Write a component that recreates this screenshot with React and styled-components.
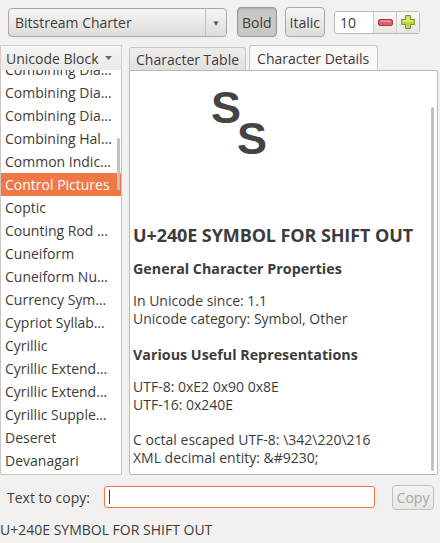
import React from 'react';
import styled, { createGlobalStyle, css } from 'styled-components';

const colors = {
  window: '#f2f1f0',
  text: '#3c3c3c',
  border: '#b6b4ae',
  orange: '#f07746',
  white: '#ffffff',
};

const GlobalStyle = createGlobalStyle`
  html, body {
    margin: 0;
    padding: 0;
    background: ${colors.window};
  }
  body {
    font-family: 'Open Sans', 'Noto Sans', sans-serif;
    font-size: 13px;
    color: ${colors.text};
  }
`;

const Window = styled.div`
  width: 440px;
  height: 543px;
  display: flex;
  flex-direction: column;
  background: ${colors.window};
  overflow: hidden;
`;

const Toolbar = styled.div`
  display: flex;
  align-items: center;
  height: 44px;
  padding: 0 8px;
`;

const buttonFace = css`
  border: 1px solid #a9a7a2;
  border-radius: 4px;
  background: linear-gradient(#f7f6f5, #dedcd8);
  box-sizing: border-box;
`;

const FontCombo = styled.div`
  ${buttonFace};
  width: 219px;
  height: 29px;
  display: flex;
  align-items: center;
  font-size: 14px;
`;

const ComboLabel = styled.span`
  flex: 1;
  padding-left: 6px;
`;

const ComboArrow = styled.span`
  width: 20px;
  height: 100%;
  border-left: 1px solid #c4c2bd;
  display: flex;
  align-items: center;
  justify-content: center;
  font-size: 8px;
  color: #555;
`;

const ToggleButton = styled.div`
  ${buttonFace};
  height: 30px;
  padding: 0 4px;
  margin-left: ${p => p.$gap}px;
  display: flex;
  align-items: center;
  font-size: 14px;
  ${p =>
    p.$active &&
    css`
      background: #cac8c4;
      border-color: #9c9a95;
      box-shadow: inset 0 1px 2px rgba(0, 0, 0, 0.15);
    `}
`;

const SpinBox = styled.div`
  display: flex;
  align-items: stretch;
  height: 23px;
  margin-left: 9px;
  border: 1px solid #bcbab5;
  border-radius: 3px;
  background: ${colors.white};
  box-sizing: border-box;
`;

const SpinEntry = styled.span`
  width: 38px;
  padding-left: 5px;
  box-sizing: border-box;
  display: flex;
  align-items: center;
  font-size: 14px;
`;

const SpinButton = styled.span`
  width: 22px;
  display: flex;
  align-items: center;
  justify-content: center;
  border-left: 1px solid #d2d0cc;
  background: linear-gradient(#f9f8f7, #e9e7e4);
`;

const Main = styled.div`
  flex: 1;
  display: flex;
  padding: 1px 2px 0 0;
  min-height: 0;
`;

const Sidebar = styled.div`
  width: 122px;
  display: flex;
  flex-direction: column;
`;

const SidebarHeader = styled.div`
  height: 25px;
  display: flex;
  align-items: center;
  gap: 6px;
  padding-left: 5px;
  font-size: 14px;
  border: 1px solid #d0cec9;
  border-bottom: none;
  background: linear-gradient(#f7f6f5, #ebeae7);
  box-sizing: border-box;
`;

const ListView = styled.div`
  flex: 1;
  position: relative;
  overflow: hidden;
  background: ${colors.white};
  border: 1px solid #c8c6c1;
  border-top: none;
  border-radius: 0 0 2px 2px;
`;

const ListInner = styled.div`
  margin-top: -12px;
`;

const ListRow = styled.div`
  height: 23px;
  line-height: 23px;
  padding-left: 4px;
  font-size: 14px;
  white-space: nowrap;
  ${p =>
    p.$selected &&
    css`
      background: ${colors.orange};
      color: ${colors.white};
    `}
`;

const Scrollbar = styled.div`
  position: absolute;
  right: 1px;
  width: 3px;
  background: #c3c1bd;
  border-radius: 2px;
`;

const Notebook = styled.div`
  flex: 1;
  display: flex;
  flex-direction: column;
  margin-left: 7px;
`;

const TabStrip = styled.div`
  display: flex;
  align-items: flex-end;
  height: 25px;
`;

const Tab = styled.div`
  height: ${p => (p.$active ? 25 : 23)}px;
  display: flex;
  align-items: center;
  padding: 0 ${p => (p.$active ? 8 : 6)}px 0 ${p => (p.$active ? 7 : 6)}px;
  margin-right: 3px;
  font-size: 14px;
  border: 1px solid #c8c6c1;
  border-bottom: none;
  border-radius: 3px 3px 0 0;
  box-sizing: border-box;
  background: ${p => (p.$active ? '#f8f8f7' : 'linear-gradient(#eeedeb, #e2e1de)')};
`;

const Page = styled.div`
  flex: 1;
  position: relative;
  background: ${colors.white};
  border: 1px solid #bcbab5;
  border-radius: 0 2px 2px 2px;
  padding: 0 3px;
  overflow: hidden;
`;

const GlyphArea = styled.div`
  height: 136px;
  display: flex;
  padding: 12px 0 0 78px;
  box-sizing: border-box;
`;

const CharTitle = styled.div`
  font-weight: 700;
  font-size: 18px;
  letter-spacing: -0.1px;
  margin-top: 16px;
`;

const SectionTitle = styled.div`
  font-weight: 700;
  font-size: 14.3px;
  margin-top: ${p => p.$top}px;
`;

const Para = styled.div`
  font-size: 14px;
  line-height: 18px;
  margin-top: ${p => p.$top}px;
`;

const CopyRow = styled.div`
  display: flex;
  align-items: center;
  height: 40px;
  margin-top: 2px;
  padding: 0 6px 0 7px;
  font-size: 14px;
`;

const CopyEntry = styled.div`
  width: 271px;
  height: 22px;
  margin-left: 14px;
  border: 1px solid ${colors.orange};
  border-radius: 3px;
  background: ${colors.white};
  box-sizing: border-box;
  display: flex;
  align-items: center;
  padding-left: 4px;
  &::before {
    content: '';
    width: 1px;
    height: 14px;
    background: #333;
  }
`;

const CopyButton = styled.div`
  ${buttonFace};
  margin-left: auto;
  width: 42px;
  height: 25px;
  display: flex;
  align-items: center;
  justify-content: center;
  color: #a8a7a4;
  border-color: #c2c0bc;
  background: linear-gradient(#f4f3f2, #e8e7e4);
`;

const StatusBar = styled.div`
  height: 24px;
  display: flex;
  align-items: center;
  font-size: 14px;
  padding-bottom: 2px;
`;

const blocks = [
  'Combining Dia…',
  'Combining Dia…',
  'Combining Dia…',
  'Combining Hal…',
  'Common Indic…',
  'Control Pictures',
  'Coptic',
  'Counting Rod …',
  'Cuneiform',
  'Cuneiform Nu…',
  'Currency Sym…',
  'Cypriot Syllab…',
  'Cyrillic',
  'Cyrillic Extend…',
  'Cyrillic Extend…',
  'Cyrillic Supple…',
  'Deseret',
  'Devanagari',
];

const MinusIcon = () => (
  <svg width="15" height="7" viewBox="0 0 15 7">
    <rect x="0.5" y="0.5" width="14" height="6" rx="1.5" fill="#df5d6a" stroke="#b23a45" />
    <rect x="2" y="1.5" width="11" height="1.5" fill="#f0959e" />
  </svg>
);

const PlusIcon = () => (
  <svg width="14" height="14" viewBox="0 0 14 14">
    <path
      d="M4.5 0.5h5v4h4v5h-4v4h-5v-4h-4v-5h4z"
      fill="#b7d34a"
      stroke="#7f9a22"
      strokeLinejoin="round"
    />
    <path d="M5.5 1.5h3v4h4v1.5h-4h-3h-4v-1.5h4z" fill="#d3e77f" />
  </svg>
);

const DropTriangle = () => (
  <svg width="7" height="4" viewBox="0 0 7 4">
    <path d="M0 0h7L3.5 4z" fill="#6b6b6b" />
  </svg>
);

// the U+240E glyph: a raised S followed by a lowered S
const ShiftOutGlyph = () => (
  <svg width="84" height="90" viewBox="0 0 84 90">
    <text x="0" y="40" fontFamily="Liberation Sans, Arial, sans-serif" fontWeight="700" fontSize="45" fill="#444">
      S
    </text>
    <text x="26" y="71" fontFamily="Liberation Sans, Arial, sans-serif" fontWeight="700" fontSize="45" fill="#444">
      S
    </text>
  </svg>
);

export default function App() {
  return (
    <Window>
      <GlobalStyle />
      <Toolbar>
        <FontCombo>
          <ComboLabel>Bitstream Charter</ComboLabel>
          <ComboArrow>▼</ComboArrow>
        </FontCombo>
        <ToggleButton $active $gap={10}>Bold</ToggleButton>
        <ToggleButton $gap={8}>Italic</ToggleButton>
        <SpinBox>
          <SpinEntry>10</SpinEntry>
          <SpinButton>
            <MinusIcon />
          </SpinButton>
          <SpinButton>
            <PlusIcon />
          </SpinButton>
        </SpinBox>
      </Toolbar>

      <Main>
        <Sidebar>
          <SidebarHeader>
            Unicode Block
            <DropTriangle />
          </SidebarHeader>
          <ListView>
            <ListInner>
              {blocks.map((name, i) => (
                <ListRow key={i} $selected={name === 'Control Pictures'}>
                  {name}
                </ListRow>
              ))}
            </ListInner>
            <Scrollbar style={{ top: 68, height: 52 }} />
          </ListView>
        </Sidebar>

        <Notebook>
          <TabStrip>
            <Tab>Character Table</Tab>
            <Tab $active>Character Details</Tab>
          </TabStrip>
          <Page>
            <GlyphArea>
              <ShiftOutGlyph />
            </GlyphArea>
            <CharTitle>U+240E SYMBOL FOR SHIFT OUT</CharTitle>
            <SectionTitle $top={12}>General Character Properties</SectionTitle>
            <Para $top={14}>
              In Unicode since: 1.1
              <br />
              Unicode category: Symbol, Other
            </Para>
            <SectionTitle $top={17}>Various Useful Representations</SectionTitle>
            <Para $top={14}>
              UTF-8: 0xE2 0x90 0x8E
              <br />
              UTF-16: 0x240E
            </Para>
            <Para $top={17}>
              C octal escaped UTF-8: \342\220\216
              <br />
              XML decimal entity: &amp;#9230;
            </Para>
            <Scrollbar style={{ top: 36, height: 364, right: 3 }} />
          </Page>
        </Notebook>
      </Main>

      <CopyRow>
        Text to copy:
        <CopyEntry />
        <CopyButton>Copy</CopyButton>
      </CopyRow>
      <StatusBar>U+240E SYMBOL FOR SHIFT OUT</StatusBar>
    </Window>
  );
}
